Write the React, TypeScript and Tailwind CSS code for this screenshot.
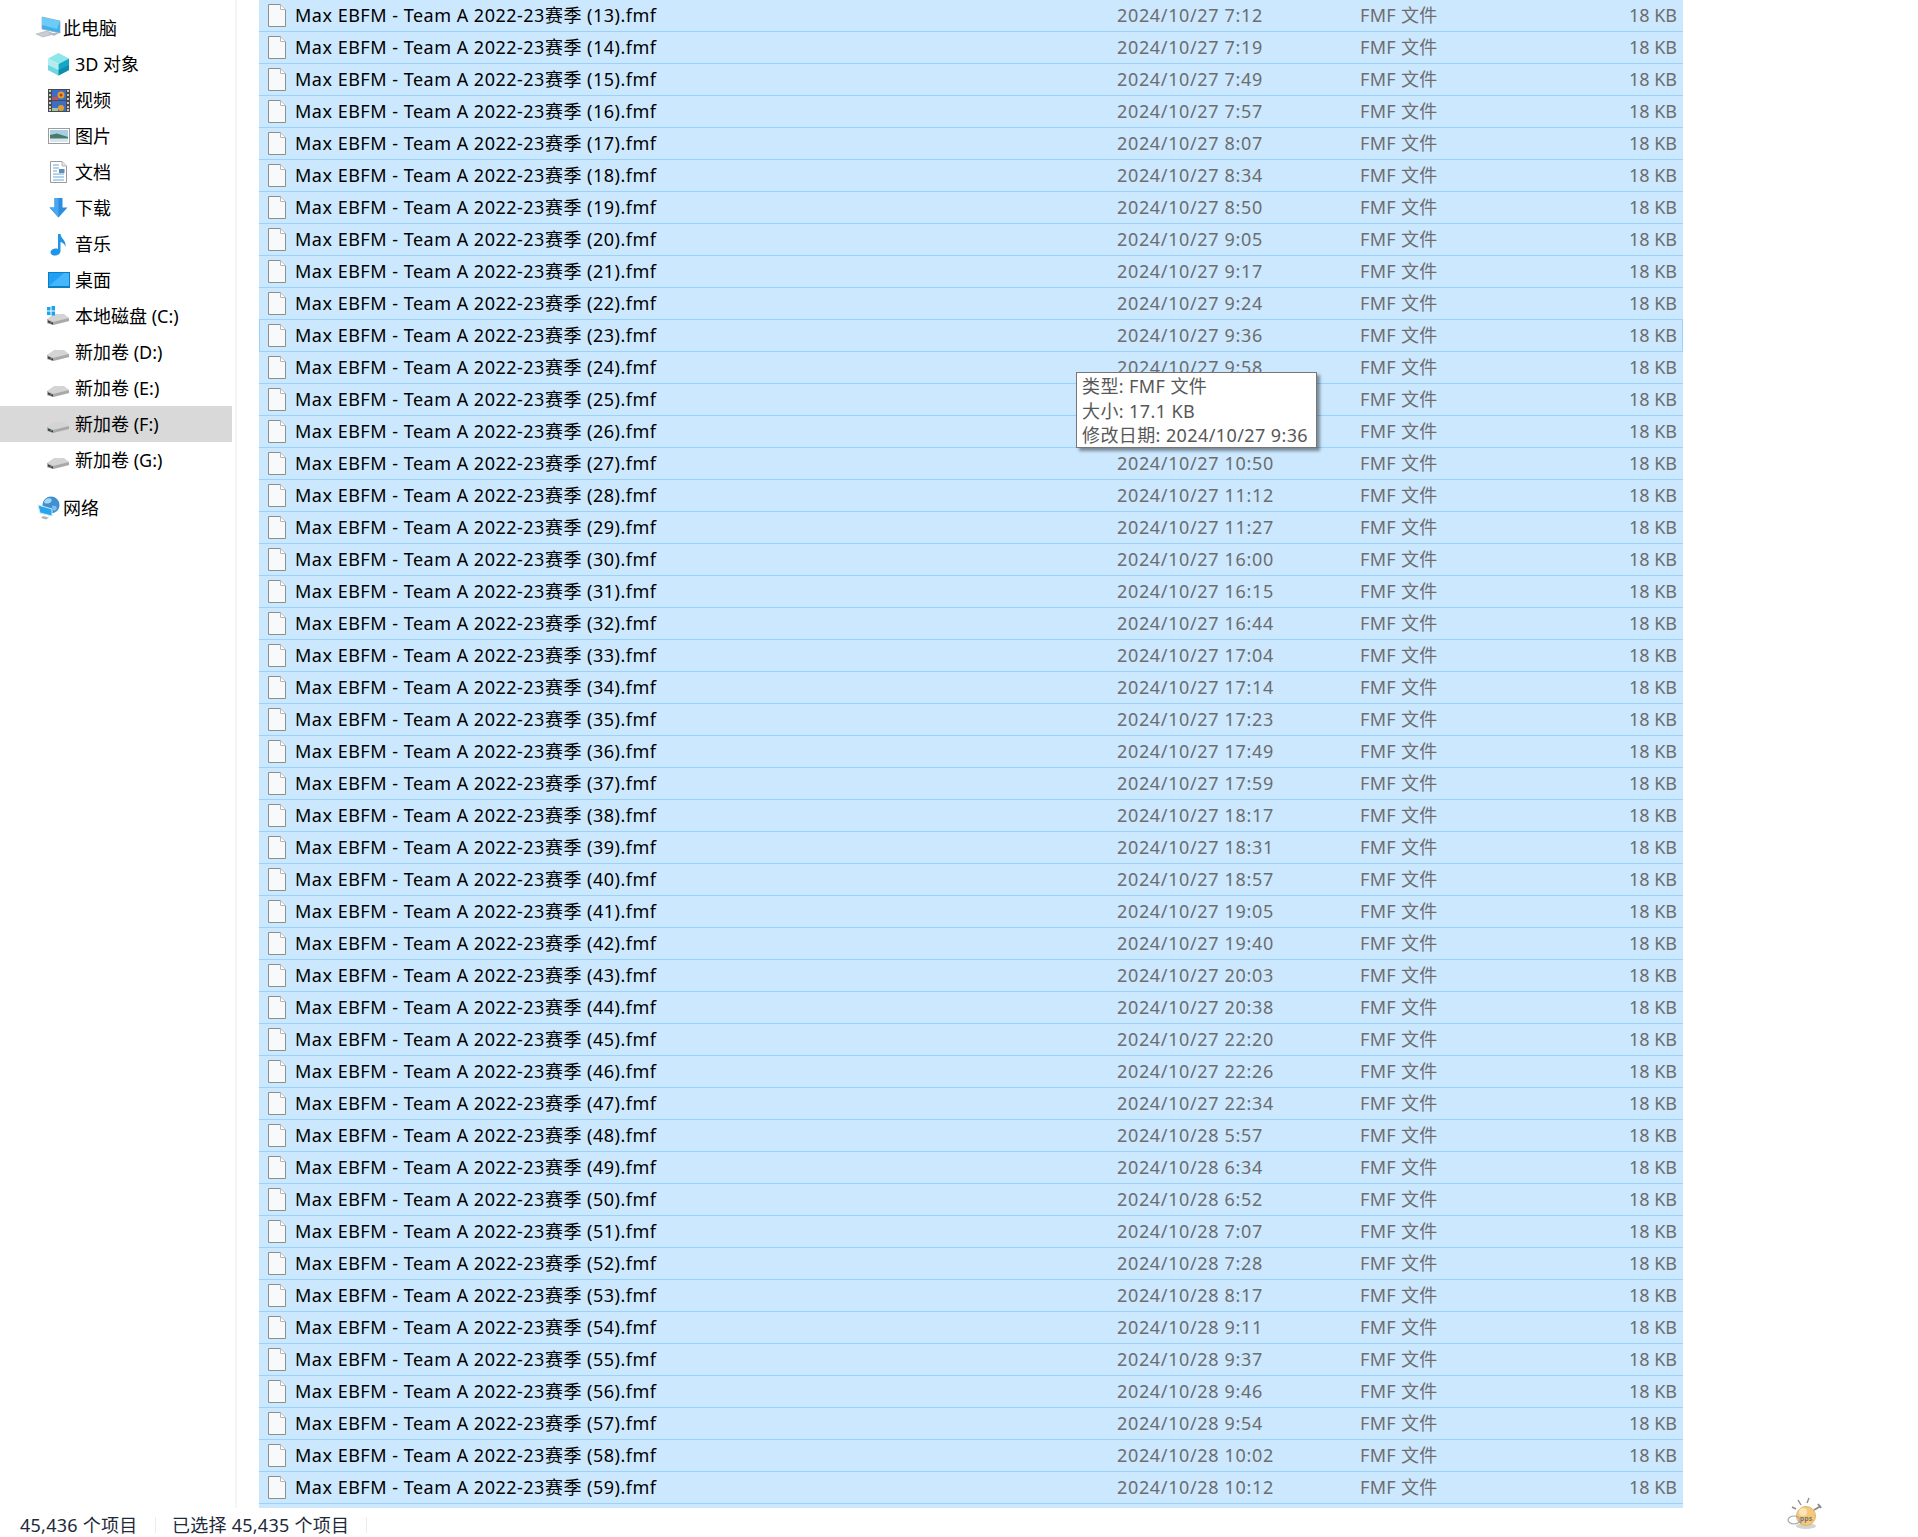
import React from "react"

const times = [
  "2024/10/27 7:12", "2024/10/27 7:19", "2024/10/27 7:49", "2024/10/27 7:57", "2024/10/27 8:07",
  "2024/10/27 8:34", "2024/10/27 8:50", "2024/10/27 9:05", "2024/10/27 9:17", "2024/10/27 9:24",
  "2024/10/27 9:36", "2024/10/27 9:58", "2024/10/27 10:15", "2024/10/27 10:32", "2024/10/27 10:50",
  "2024/10/27 11:12", "2024/10/27 11:27", "2024/10/27 16:00", "2024/10/27 16:15", "2024/10/27 16:44",
  "2024/10/27 17:04", "2024/10/27 17:14", "2024/10/27 17:23", "2024/10/27 17:49", "2024/10/27 17:59",
  "2024/10/27 18:17", "2024/10/27 18:31", "2024/10/27 18:57", "2024/10/27 19:05", "2024/10/27 19:40",
  "2024/10/27 20:03", "2024/10/27 20:38", "2024/10/27 22:20", "2024/10/27 22:26", "2024/10/27 22:34",
  "2024/10/28 5:57", "2024/10/28 6:34", "2024/10/28 6:52", "2024/10/28 7:07", "2024/10/28 7:28",
  "2024/10/28 8:17", "2024/10/28 9:11", "2024/10/28 9:37", "2024/10/28 9:46", "2024/10/28 9:54",
  "2024/10/28 10:02", "2024/10/28 10:12",
]

function FileIcon() {
  return (
    <svg width="18" height="23" viewBox="0 0 18 23" className="shrink-0">
      <path d="M.5.5H12.5L17.5 5.5V22.5H.5Z" fill="#f8f9fa" stroke="#8e8e8e" />
      <path d="M12.5.5V5.5H17.5" fill="#fff" stroke="#b5b5b5" />
    </svg>
  )
}

function Drive({ win }: { win?: boolean }) {
  return (
    <svg width="23" height="24" viewBox="0 0 23 24">
      <path d="M0 15 L7 10 H17 L22 14 L22 17 L6 21 L0 19Z" fill="#d4d4d4" />
      <path d="M0 15 L6 18 L22 14 L22 17 L6 21 L0 19Z" fill="#a9a9a9" />
      <path d="M1 16.5 L6 18.5 V20.5 L1 18.5Z" fill="#3b3b3b" />
      <path d="M3 18l2 .8" stroke="#4caf50" strokeWidth="1" />
      {win && (
        <g fill="#19a3f0">
          <rect x="0" y="3" width="3.5" height="3.5" />
          <rect x="4.5" y="2" width="3.5" height="4.5" />
          <rect x="0" y="7.5" width="3.5" height="3.5" />
          <rect x="4.5" y="7.5" width="3.5" height="4" />
        </g>
      )}
    </svg>
  )
}

const icons: Record<string, React.ReactNode> = {
  pc: (
    <svg width="27" height="24" viewBox="0 0 27 24">
      <path d="M7 1 L25 5 V17 L7 13Z" fill="#3fb0ee" stroke="#8fa5b5" strokeWidth=".7" />
      <path d="M7 1 L25 5 L22 13 L7 9Z" fill="#6ccbf7" />
      <path d="M1 18 L12 15 L19 18 L8 21Z" fill="#c8ced3" stroke="#9aa3aa" strokeWidth=".5" />
      <path d="M13 17 L24 17 L19 20Z" fill="#b3bbc1" />
    </svg>
  ),
  cube: (
    <svg width="23" height="23" viewBox="0 0 23 23">
      <path d="M11.5 0 L22 5.5 L11.5 11 L1 5.5Z" fill="#8de6ea" />
      <path d="M1 5.5 L11.5 11 V22.5 L1 17Z" fill="#b4ecee" />
      <path d="M22 5.5 L11.5 11 V22.5 L22 17Z" fill="#14a8c8" />
      <path d="M1 12 L11.5 17 V22.5 L1 17Z" fill="#6fd6df" />
      <path d="M22 12 L11.5 17 V22.5 L22 17Z" fill="#0c8fae" />
    </svg>
  ),
  video: (
    <svg width="22" height="23" viewBox="0 0 22 23">
      <rect width="22" height="23" fill="#4a4a4a" />
      <g fill="#c9c9c9">
        {[1, 5, 9, 13, 17, 20].map((y) => (
          <g key={y}>
            <rect x="1" y={y} width="2" height="2" />
            <rect x="19" y={y} width="2" height="2" />
          </g>
        ))}
      </g>
      <rect x="4" y="1" width="14" height="10" fill="#3c6ec8" />
      <rect x="4" y="12" width="14" height="10" fill="#3c6ec8" />
      <circle cx="13" cy="6" r="3.5" fill="#e0a030" />
      <circle cx="13" cy="6" r="1.5" fill="#c8352c" />
      <rect x="4" y="8" width="6" height="3" fill="#c5534b" />
      <circle cx="13" cy="19" r="3" fill="#e0a030" />
      <rect x="4" y="19" width="6" height="3" fill="#9fc3a0" />
    </svg>
  ),
  picture: (
    <svg width="22" height="16" viewBox="0 0 22 16">
      <rect x=".5" y=".5" width="21" height="15" fill="#fff" stroke="#9c9c9c" />
      <rect x="2" y="2" width="18" height="12" fill="#a8cde6" />
      <path d="M2 7 L9 5.5 L20 9 V11 H2Z" fill="#4b7a66" />
      <rect x="2" y="10.5" width="18" height="3.5" fill="#d5e6f0" />
    </svg>
  ),
  doc: (
    <svg width="17" height="22" viewBox="0 0 17 22">
      <path d="M.5.5H12L16.5 5V21.5H.5Z" fill="#fff" stroke="#9a9a9a" />
      <path d="M12 .5V5H16.5" fill="#e6e6e6" stroke="#b5b5b5" />
      <path d="M3 4h6M3 7h6M3 10h4M3 13h11M3 16h11M3 19h11" stroke="#6ba6d8" strokeWidth="1" />
      <rect x="9" y="8" width="5.5" height="4" fill="#5d8fb5" />
    </svg>
  ),
  download: (
    <svg width="19" height="20" viewBox="0 0 19 20">
      <path d="M5.5 0H13.5V9.5H18.5L9.5 19.5L.5 9.5H5.5Z" fill="#2c8de0" />
      <path d="M5.5 0H9.5V19.5L.5 9.5H5.5Z" fill="#4ba6ee" />
    </svg>
  ),
  music: (
    <svg width="17" height="23" viewBox="0 0 17 23">
      <path d="M8 1 H10.5 C11 6 16.5 7 15.5 14 C14.5 10.5 12.5 9.5 10.5 9 V18 C10.5 21 7.5 22.5 4.5 22.5 C2 22.5 .5 21 .5 19.5 C.5 17 3.5 15.5 6 15.5 C6.8 15.5 7.5 15.6 8 16Z" fill="#1f94e8" />
    </svg>
  ),
  desktop: (
    <svg width="22" height="16" viewBox="0 0 22 16">
      <rect width="22" height="16" fill="#0b7fc4" />
      <rect x="1" y="1" width="20" height="13" fill="#1ea1f7" />
      <path d="M1 14 L16 1 H21 V14Z" fill="#46b6fb" />
    </svg>
  ),
  network: (
    <svg width="24" height="24" viewBox="0 0 24 24">
      <circle cx="14" cy="9" r="8.5" fill="#3f8fd2" />
      <path d="M9 3 C13 1 16 3 14 6 C11 8 8 8 7 6Z" fill="#a7d5f2" />
      <path d="M15 10 C19 9 21 11 19 14 C17 16 15 14 15 10Z" fill="#7fc0ea" />
      <path d="M1 9 L15 13 V20 L3 17Z" fill="#24a5ee" stroke="#d5e8f4" strokeWidth="1" />
      <path d="M6 20 L12 21.5 L9 23.5 L4 22Z" fill="#aeb6bc" />
    </svg>
  ),
}

function NavItem({ icon, label, top, selected }: { icon: React.ReactNode; label: string; top?: boolean; selected?: boolean }) {
  return (
    <div className={`flex h-9 items-center ${top ? "pl-[35px]" : "pl-[47px]"} ${selected ? "bg-[#d9d9d9]" : ""}`}>
      <div className={`flex items-center justify-center ${top ? "w-[27px]" : "w-[23px]"}`}>{icon}</div>
      <span className={top ? "ml-px" : "ml-[5px]"}>{label}</span>
    </div>
  )
}

function Row({ n, time, focused }: { n: number; time: string; focused?: boolean }) {
  return (
    <div className={`flex h-8 items-center border-b border-[#99d1ff] bg-[#cce8ff] ${focused ? "-mt-px h-[33px] border-x border-t" : ""}`}>
      <div className={`flex items-center ${focused ? "w-[857px] pl-2" : "w-[858px] pl-[9px]"}`}>
        <FileIcon />
        <span className="ml-[9px] whitespace-nowrap pb-[2px] tracking-[0.5px] text-black">Max EBFM - Team A 2022-23赛季 ({n}).fmf</span>
      </div>
      <span className="w-[243px] whitespace-nowrap pb-[2px] tracking-[0.65px] text-[#6d6d6d]">{time}</span>
      <span className="w-[200px] whitespace-nowrap pb-[2px] tracking-[0.3px] text-[#6d6d6d]">FMF 文件</span>
      <span className="w-[117px] whitespace-nowrap pb-[2px] text-right text-[#6d6d6d]">18 KB</span>
    </div>
  )
}

export default function App() {
  return (
    <div className="relative h-[1537px] w-[1918px] overflow-hidden bg-white font-[family-name:'Noto_Sans','Noto_Sans_CJK_SC',sans-serif] text-[18px] leading-none text-black">
      <div className="flex h-[1508px]">
        {/* Navigation */}
        <aside className="w-[232px] shrink-0 pt-[10px]">
          <NavItem top icon={icons.pc} label="此电脑" />
          <NavItem icon={icons.cube} label="3D 对象" />
          <NavItem icon={icons.video} label="视频" />
          <NavItem icon={icons.picture} label="图片" />
          <NavItem icon={icons.doc} label="文档" />
          <NavItem icon={icons.download} label="下载" />
          <NavItem icon={icons.music} label="音乐" />
          <NavItem icon={icons.desktop} label="桌面" />
          <NavItem icon={<Drive win />} label="本地磁盘 (C:)" />
          <NavItem icon={<Drive />} label="新加卷 (D:)" />
          <NavItem icon={<Drive />} label="新加卷 (E:)" />
          <NavItem selected icon={<Drive />} label="新加卷 (F:)" />
          <NavItem icon={<Drive />} label="新加卷 (G:)" />
          <div className="mt-3">
            <NavItem top icon={icons.network} label="网络" />
          </div>
        </aside>
        <div className="ml-[3px] w-[2px] bg-[#f5f5f5]" />

        {/* File list */}
        <main className="ml-[22px] flex h-[1508px] w-[1424px] flex-col bg-[#cce8ff]">
          {times.map((t, i) => (
            <Row key={t} n={i + 13} time={t} focused={i === 10} />
          ))}
        </main>
      </div>

      {/* Status bar */}
      <footer className="flex h-[29px] items-center pl-5 pt-[5px] tracking-[0.25px] text-[#1e2a3a]">
        <span className="w-[135px]">45,436 个项目</span>
        <div className="h-4 w-px bg-[#ececec]" />
        <span className="ml-4 w-[194px]">已选择 45,435 个项目</span>
        <div className="h-4 w-px bg-[#ececec]" />
      </footer>

      {/* Tooltip */}
      <div className="absolute left-[1076px] top-[372px] h-[76px] w-[241px] border border-[#767676] bg-white pl-[5px] pt-px text-[18px] leading-[24.5px] tracking-[0.4px] text-[#575757] shadow-[3px_3px_3px_rgba(0,0,0,0.4)]">
        <div className="whitespace-nowrap">类型: FMF 文件</div>
        <div className="whitespace-nowrap">大小: 17.1 KB</div>
        <div className="whitespace-nowrap">修改日期: 2024/10/27 9:36</div>
      </div>

      {/* Tray mascot */}
      <svg className="absolute left-[1786px] top-[1495px]" width="40" height="36" viewBox="0 0 40 36">
        <ellipse cx="20" cy="31" rx="10" ry="3" fill="#b5b5b5" opacity=".6" />
        <circle cx="20" cy="21" r="9.5" fill="#f5c87a" stroke="#e2b265" />
        <circle cx="17" cy="17" r="4" fill="#fbe5b8" />
        <text x="20" y="26" textAnchor="middle" fontSize="7" fontWeight="700" fill="#777">pps</text>
        <path d="M6 12l4 2M12 5l3 5M23 3l-2 5" stroke="#8c8c8c" strokeWidth="1.4" />
        <path d="M28 15l7-4M32 9l3 4" stroke="#8c8c8c" strokeWidth="2" />
        <ellipse cx="8" cy="25" rx="6" ry="4" fill="none" stroke="#a5a5a5" strokeWidth="1.2" />
      </svg>
    </div>
  )
}
